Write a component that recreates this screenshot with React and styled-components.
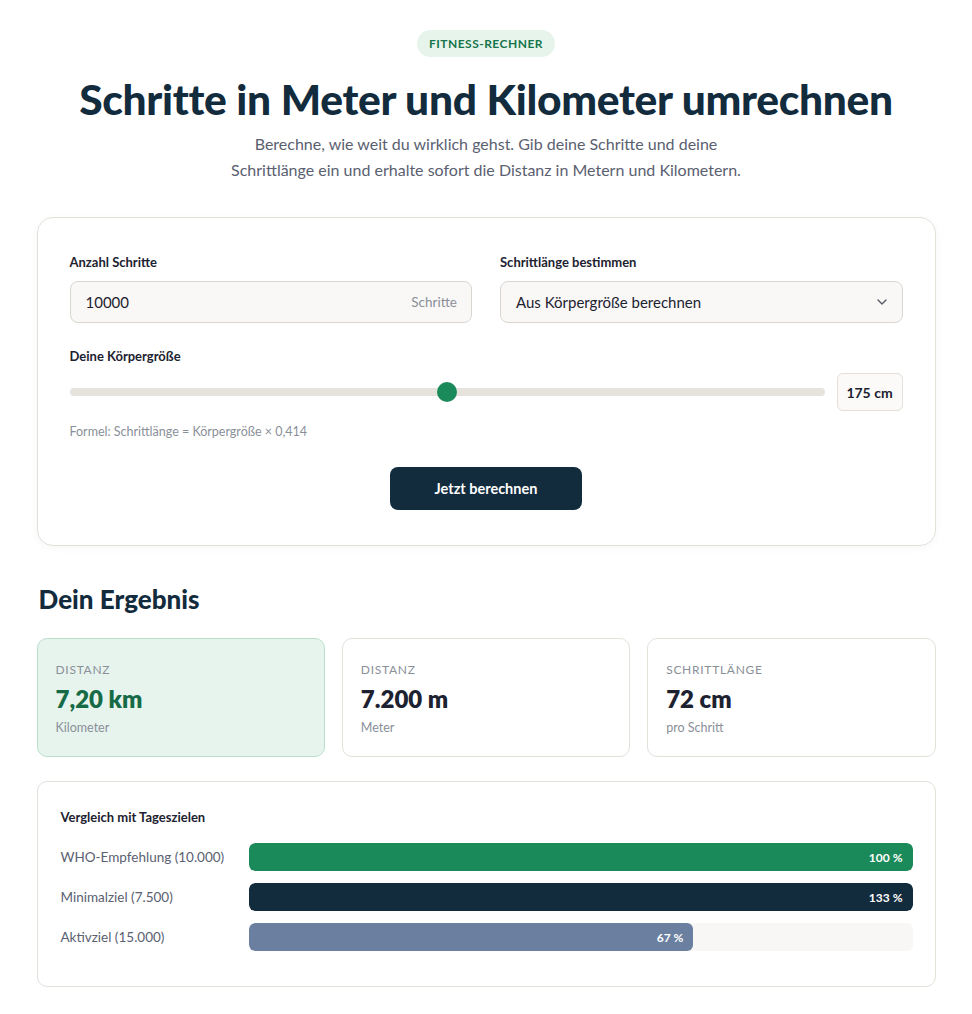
import React from 'react'
import styled, { createGlobalStyle } from 'styled-components'

const colorNavy = '#122b3d'
const colorGreen = '#1b8a5a'
const colorGreenDark = '#166b46'
const colorMuted = '#8a8f99'
const colorText = '#1d2230'
const colorBorder = '#e4e1db'

const GlobalStyle = createGlobalStyle`
  body {
    margin: 0;
    background: #ffffff;
    font-family: Lato, "Noto Sans", sans-serif;
    color: ${colorText};
  }
`

const Page = styled.main`
  max-width: 899px;
  margin: 0 auto;
  padding: 30px 0 28px;
`

const Hero = styled.header`
  display: flex;
  flex-direction: column;
  align-items: center;
  text-align: center;
`

const Badge = styled.span`
  display: inline-block;
  padding: 6px 12px;
  border-radius: 999px;
  background: #e6f4ec;
  color: #17744b;
  font-size: 12px;
  font-weight: 700;
  letter-spacing: 0.04em;
`

const Title = styled.h1`
  margin: 16px 0 0;
  font-size: 42.5px;
  line-height: 52px;
  font-weight: 900;
  letter-spacing: -0.3px;
  color: ${colorNavy};
`

const Lead = styled.p`
  margin: 6px 0 0;
  max-width: 545px;
  font-size: 16px;
  line-height: 26px;
  color: #5a6070;
`

const Card = styled.section`
  margin-top: 34px;
  padding: 35px 32px 35px;
  border: 1px solid ${colorBorder};
  border-radius: 16px;
  background: #fff;
  box-shadow: 0 2px 8px rgba(20, 30, 40, 0.04);
`

const FieldGrid = styled.div`
  display: grid;
  grid-template-columns: 1fr 1fr;
  gap: 28px;
`

const Field = styled.div`
  display: flex;
  flex-direction: column;
`

const Label = styled.label`
  font-size: 13px;
  font-weight: 700;
  color: ${colorText};
  margin-bottom: 10px;
  line-height: 18px;
`

const InputBox = styled.div`
  display: flex;
  align-items: center;
  justify-content: space-between;
  height: 40px;
  padding: 0 12px 0 15px;
  border: 1px solid #d9d6d0;
  border-radius: 8px;
  background: #f9f8f6;
  font-size: 15px;
  color: ${colorText};
`

const Unit = styled.span`
  font-size: 13.5px;
  color: ${colorMuted};
  margin-right: 2px;
`

const Chevron = () => (
  <svg width="16" height="16" viewBox="0 0 24 24" fill="none" stroke="#555b66" strokeWidth="2" strokeLinecap="round" strokeLinejoin="round">
    <path d="m6 9 6 6 6-6" />
  </svg>
)

const HeightField = styled(Field)`
  margin-top: 24px;
`

const SliderRow = styled.div`
  display: flex;
  align-items: center;
  gap: 12px;
  margin-top: -2px;
`

const Track = styled.div`
  position: relative;
  flex: 1;
  height: 8px;
  border-radius: 4px;
  background: #e6e3dd;
`

const Thumb = styled.span`
  position: absolute;
  top: 50%;
  width: 20px;
  height: 20px;
  margin: -10px 0 0 -10px;
  border-radius: 50%;
  background: ${colorGreen};
`

const ValueBox = styled.div`
  display: flex;
  align-items: center;
  justify-content: center;
  width: 64px;
  height: 36px;
  border: 1px solid ${colorBorder};
  border-radius: 6px;
  background: #fbfaf8;
  font-size: 14px;
  font-weight: 700;
`

const Formula = styled.p`
  margin: 13px 0 0;
  font-size: 12.5px;
  color: ${colorMuted};
`

const Actions = styled.div`
  display: flex;
  justify-content: center;
  margin-top: 28px;
`

const Button = styled.button`
  width: 192px;
  height: 43px;
  border: 0;
  border-radius: 8px;
  background: ${colorNavy};
  color: #fff;
  font-family: inherit;
  font-size: 14.5px;
  font-weight: 700;
  cursor: pointer;
`

const SectionTitle = styled.h2`
  margin: 37px 0 0 2px;
  font-size: 26px;
  line-height: 32px;
  font-weight: 900;
  color: ${colorNavy};
`

const ResultGrid = styled.div`
  display: grid;
  grid-template-columns: repeat(3, 1fr);
  gap: 17px;
  margin-top: 23px;
`

const ResultCard = styled.div`
  padding: 23px 18px 21px;
  border: 1px solid ${props => props.highlight ? '#b9e0cc' : colorBorder};
  border-radius: 10px;
  background: ${props => props.highlight ? '#e7f4ee' : '#fff'};
`

const ResultLabel = styled.div`
  font-size: 12px;
  letter-spacing: 0.06em;
  color: ${colorMuted};
  line-height: 16px;
`

const ResultValue = styled.div`
  margin-top: 6px;
  font-size: 24px;
  line-height: 30px;
  font-weight: 800;
  color: ${props => props.highlight ? colorGreenDark : colorText};
`

const ResultSub = styled.div`
  margin-top: 6px;
  font-size: 12.5px;
  color: ${colorMuted};
`

const CompareCard = styled.section`
  margin-top: 24px;
  padding: 27px 22px 35px 23px;
  border: 1px solid ${colorBorder};
  border-radius: 10px;
  background: #fff;
`

const CompareTitle = styled.h3`
  margin: 0 0 18px;
  font-size: 13px;
  font-weight: 700;
  color: ${colorText};
`

const BarList = styled.div`
  display: flex;
  flex-direction: column;
  gap: 12px;
`

const BarRow = styled.div`
  display: grid;
  grid-template-columns: 188px 1fr;
  align-items: center;
`

const BarLabel = styled.span`
  font-size: 13.5px;
  color: #5a6070;
`

const BarTrack = styled.div`
  height: 28px;
  border-radius: 6px;
  background: #f8f7f5;
  overflow: hidden;
`

const BarFill = styled.div`
  height: 100%;
  display: flex;
  align-items: center;
  justify-content: flex-end;
  padding-right: 10px;
  box-sizing: border-box;
  border-radius: 6px;
  background: ${props => props.color};
  color: #fff;
  font-size: 12px;
  font-weight: 700;
`

const results = [
  { label: 'Distanz', value: '7,20 km', sub: 'Kilometer', highlight: true },
  { label: 'Distanz', value: '7.200 m', sub: 'Meter' },
  { label: 'Schrittlänge', value: '72 cm', sub: 'pro Schritt' },
]

const goals = [
  { label: 'WHO-Empfehlung (10.000)', pct: 100, color: colorGreen },
  { label: 'Minimalziel (7.500)', pct: 133, color: colorNavy },
  { label: 'Aktivziel (15.000)', pct: 67, color: '#6b7fa0' },
]

export default function App() {
  return (
    <>
      <GlobalStyle />
      <Page>
        <Hero>
          <Badge>FITNESS-RECHNER</Badge>
          <Title>Schritte in Meter und Kilometer umrechnen</Title>
          <Lead>
            Berechne, wie weit du wirklich gehst. Gib deine Schritte und deine
            Schrittlänge ein und erhalte sofort die Distanz in Metern und Kilometern.
          </Lead>
        </Hero>

        <Card>
          <FieldGrid>
            <Field>
              <Label>Anzahl Schritte</Label>
              <InputBox>
                <span>10000</span>
                <Unit>Schritte</Unit>
              </InputBox>
            </Field>
            <Field>
              <Label>Schrittlänge bestimmen</Label>
              <InputBox>
                <span>Aus Körpergröße berechnen</span>
                <Chevron />
              </InputBox>
            </Field>
          </FieldGrid>

          <HeightField>
            <Label>Deine Körpergröße</Label>
            <SliderRow>
              <Track>
                <Thumb style={{ left: '50%' }} />
              </Track>
              <ValueBox>175 cm</ValueBox>
            </SliderRow>
            <Formula>Formel: Schrittlänge = Körpergröße × 0,414</Formula>
          </HeightField>

          <Actions>
            <Button>Jetzt berechnen</Button>
          </Actions>
        </Card>

        <SectionTitle>Dein Ergebnis</SectionTitle>
        <ResultGrid>
          {results.map((r, i) => (
            <ResultCard key={i} highlight={r.highlight}>
              <ResultLabel>{r.label.toUpperCase()}</ResultLabel>
              <ResultValue highlight={r.highlight}>{r.value}</ResultValue>
              <ResultSub>{r.sub}</ResultSub>
            </ResultCard>
          ))}
        </ResultGrid>

        <CompareCard>
          <CompareTitle>Vergleich mit Tageszielen</CompareTitle>
          <BarList>
            {goals.map(g => (
              <BarRow key={g.label}>
                <BarLabel>{g.label}</BarLabel>
                <BarTrack>
                  <BarFill color={g.color} style={{ width: `${Math.min(g.pct, 100)}%` }}>
                    {g.pct} %
                  </BarFill>
                </BarTrack>
              </BarRow>
            ))}
          </BarList>
        </CompareCard>
      </Page>
    </>
  )
}
